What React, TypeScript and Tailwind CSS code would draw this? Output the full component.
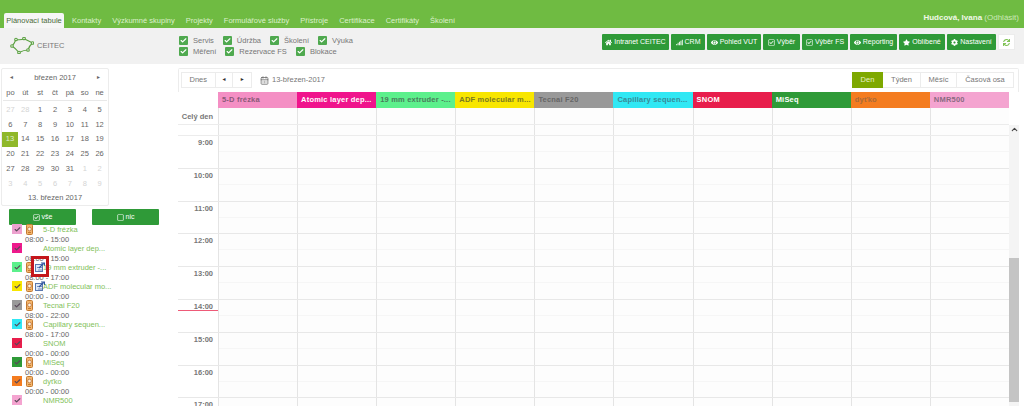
import { Check, CalendarDays, ChevronUp } from 'lucide-react';
import { FaCog, FaEye, FaHome, FaRegCheckSquare, FaRegSquare, FaSignal, FaStar, FaSync } from 'react-icons/fa';

const tabs = ['Kontakty', 'Výzkumné skupiny', 'Projekty', 'Formulářové služby', 'Přístroje', 'Certifikace', 'Certifikáty', 'Školení'];

const filterRows = [
  ['Servis', 'Údržba', 'Školení', 'Výuka'],
  ['Měření', 'Rezervace FS', 'Blokace'],
];

const calendarWeeks = [
  ['27', '28', '1', '2', '3', '4', '5'],
  ['6', '7', '8', '9', '10', '11', '12'],
  ['13', '14', '15', '16', '17', '18', '19'],
  ['20', '21', '22', '23', '24', '25', '26'],
  ['27', '28', '29', '30', '31', '1', '2'],
  ['3', '4', '5', '6', '7', '8', '9'],
];

const columns = [
  { name: '5-D frézka', cls: 'bg-[#f48fc4] text-[#8a5a78]' },
  { name: 'Atomic layer dep...', cls: 'bg-[#f0148c] text-white' },
  { name: '19 mm extruder -...', cls: 'bg-[#5cf08c] text-[#4a7a5c]' },
  { name: 'ADF molecular m...', cls: 'bg-[#f8e600] text-[#7a7a20]' },
  { name: 'Tecnai F20', cls: 'bg-[#999999] text-[#666666]' },
  { name: 'Capillary sequen...', cls: 'bg-[#30e8f4] text-[#3a8a96]' },
  { name: 'SNOM', cls: 'bg-[#e81e4c] text-white' },
  { name: 'MiSeq', cls: 'bg-[#2f9a38] text-white' },
  { name: 'dyťko', cls: 'bg-[#f47c20] text-[#a86a3a]' },
  { name: 'NMR500', cls: 'bg-[#f4a4d0] text-[#8a6a80]' },
];

const devices = [
  { name: '5-D frézka', time: '08:00 - 15:00', color: 'bg-[#eda1cf]', door: true },
  { name: 'Atomic layer dep...', time: '08:00 - 15:00', color: 'bg-[#ee1a8c]', door: false },
  { name: '19 mm extruder -...', time: '08:00 - 17:00', color: 'bg-[#5cf08c]', door: true, blue: true },
  { name: 'ADF molecular mo...', time: '00:00 - 00:00', color: 'bg-[#f8e600]', door: true, blue: true },
  { name: 'Tecnai F20', time: '08:00 - 22:00', color: 'bg-[#999999]', door: true },
  { name: 'Capillary sequen...', time: '08:00 - 17:00', color: 'bg-[#30e8f4]', door: true },
  { name: 'SNOM', time: '00:00 - 00:00', color: 'bg-[#e81e4c]', door: false },
  { name: 'MiSeq', time: '00:00 - 00:00', color: 'bg-[#2f9a38]', door: true },
  { name: 'dyťko', time: '00:00 - 00:00', color: 'bg-[#f47c20]', door: true },
  { name: 'NMR500', time: '', color: 'bg-[#f4a4d0]', door: false },
];

const hours = ['9:00', '10:00', '11:00', '12:00', '13:00', '14:00', '15:00', '16:00', '17:00'];

function DoorIcon() {
  return (
    <svg width="7" height="11" viewBox="0 0 7 11" className="shrink-0">
      <rect x="0.5" y="0.5" width="6" height="10" rx="1" fill="#f2b56c" stroke="#c47a30" />
      <circle cx="3.5" cy="5" r="1.8" fill="#fff4dc" stroke="#a8582a" strokeWidth="0.6" />
      <rect x="2" y="8" width="3" height="1" fill="#c47a30" />
    </svg>
  );
}

function BlueIcon() {
  return (
    <svg width="10" height="10" viewBox="0 0 10 10" className="shrink-0">
      <rect x="0.5" y="2.5" width="7" height="7" fill="#dfe8f6" stroke="#5a78b0" />
      <path d="M2 5.5 H7.5 M3 8 H7" stroke="#5a78b0" strokeWidth="0.8" />
      <path d="M4 6 L8.5 1.5 M6 1 H9.5 V4" fill="none" stroke="#2f55a0" strokeWidth="1.2" />
    </svg>
  );
}

function ToolButton({ icon, label, width }: { icon: React.ReactNode; label: string; width: string }) {
  return (
    <button className={`flex h-[16px] ${width} items-center justify-center gap-[2px] rounded-[1px] bg-[#2f9a38] text-[7px] text-white`}>
      {icon}
      {label}
    </button>
  );
}

function FilterCheck({ label }: { label: string }) {
  return (
    <span className="flex items-center gap-[5px]">
      <span className="flex h-[9px] w-[9px] items-center justify-center rounded-[1px] bg-[#4fa94f]">
        <Check size={7} strokeWidth={4} className="text-white" />
      </span>
      <span>{label}</span>
    </span>
  );
}

function MiniCalendar() {
  return (
    <div className="ml-[1px] h-[138px] w-[108px] rounded-[2px] border border-[#ececec] px-[1px] text-[7.5px] text-[#666666]">
      <div className="flex h-[16px] items-center justify-between px-[6px] pt-[1px]">
        <span className="text-[5px]">◄</span>
        <span>březen 2017</span>
        <span className="text-[5px]">►</span>
      </div>
      <div className="mb-[1px] grid h-[16px] grid-cols-7 items-center border-b border-[#e8e8e8] text-center">
        {['po', 'út', 'st', 'čt', 'pá', 'so', 'ne'].map((d) => (
          <span key={d}>{d}</span>
        ))}
      </div>
      {calendarWeeks.map((week, w) => (
        <div key={w} className="grid h-[14.8px] grid-cols-7 items-center text-center">
          {week.map((day, i) => {
            const muted = (w === 0 && i < 2) || (w === 4 && i > 4) || w === 5;
            const today = w === 2 && i === 0;
            return (
              <span
                key={i}
                className={
                  today
                    ? 'ml-[-1px] flex h-[15px] items-center justify-center bg-[#8fb82a] text-[#dff0d0]'
                    : muted
                      ? 'text-[#d4d4d4]'
                      : ''
                }
              >
                {day}
              </span>
            );
          })}
        </div>
      ))}
      <div className="pt-[1px] text-center">13. březen 2017</div>
    </div>
  );
}

function DeviceList() {
  return (
    <div className="relative mt-[-1px]">
      {devices.map((d) => (
        <div key={d.name} className="h-[19px]">
          <div className="flex h-[10px] items-center">
            <span className={`ml-[12px] flex h-[10px] w-[10px] shrink-0 items-center justify-center ${d.color}`}>
              <Check size={7} strokeWidth={4} className="text-[#5a4a5a]" />
            </span>
            <span className="ml-[4px] flex w-[17px] shrink-0 items-center gap-[2px]">
              {d.door && <DoorIcon />}
              {d.blue && <BlueIcon />}
            </span>
            <span className="whitespace-nowrap text-[7.5px] leading-[9px] text-[#7fc15a]">{d.name}</span>
          </div>
          <div className="ml-[25px] h-[9px] pt-[1px] text-[7.5px] leading-[10px] text-[#666666]">{d.time}</div>
        </div>
      ))}
      <div className="absolute left-[31px] top-[32px] h-[21px] w-[18px] border-[3px] border-[#c4161c]" />
    </div>
  );
}

function Cells({ half }: { half?: boolean }) {
  return (
    <>
      {columns.map((c) => (
        <div key={c.name} className="flex w-[79.1px] flex-col border-l border-[#e4e4e4] bg-[#fdfdfd]">
          {half && <div className="h-[16px] border-b border-[#f6f6f6]" />}
        </div>
      ))}
    </>
  );
}

function Scheduler() {
  return (
    <div className="ml-[69px] mr-[5px] flex min-w-0 flex-1 flex-col overflow-hidden rounded-t-[2px] border-t border-[#ececec]">
      <div className="flex h-[23px] shrink-0 items-start justify-between border-l border-r border-[#ececec] pl-[2px] pr-[4px] pt-[3px] text-[7.5px] text-[#777777]">
        <div className="flex items-center">
          <div className="flex h-[16px] w-[71px] border border-[#ececec]">
            <span className="flex w-[34px] items-center justify-center border-r border-[#ececec]">Dnes</span>
            <span className="flex w-[18px] items-center justify-center border-r border-[#ececec] text-[5px] text-[#333333]">◄</span>
            <span className="flex w-[18px] items-center justify-center text-[5px] text-[#333333]">►</span>
          </div>
          <CalendarDays size={9} className="ml-[8px] text-[#666666]" />
          <span className="ml-[3px]">13-březen-2017</span>
        </div>
        <div className="flex h-[16px]">
          <span className="flex w-[31px] items-center justify-center bg-[#7ea800] text-[#e8f2c8]">Den</span>
          <span className="flex w-[37px] items-center justify-center border-y border-[#ececec]">Týden</span>
          <span className="flex w-[37px] items-center justify-center border border-[#ececec]">Měsíc</span>
          <span className="flex w-[57px] items-center justify-center border-y border-r border-[#ececec]">Časová osa</span>
        </div>
      </div>
      <div className="flex min-h-0 flex-1">
        <div className="flex w-[831px] shrink-0 flex-col">
          <div className="flex h-[16px] shrink-0 pl-[40px]">
            {columns.map((c) => (
              <div
                key={c.name}
                className={`flex w-[79.1px] items-center whitespace-nowrap pl-[4px] text-[7.5px] font-bold tracking-[0.2px] ${c.cls}`}
              >
                {c.name}
              </div>
            ))}
          </div>
          <div className="flex h-[17px] shrink-0 border-b border-[#ececec]">
            <div className="w-[40px] shrink-0 whitespace-nowrap pr-[5px] pt-[3px] text-right text-[7.5px] font-bold text-[#777777]">Celý den</div>
            <Cells />
          </div>
          <div className="flex h-[11px] shrink-0 border-b border-[#ececec]">
            <div className="w-[40px] shrink-0" />
            <Cells />
          </div>
          {hours.map((h) => (
            <div key={h} className="flex h-[32.8px] shrink-0 border-b border-[#e8e8e8]">
              <div className="relative w-[40px] shrink-0 pr-[5px] pt-[1px] text-right text-[7.5px] font-bold text-[#777777]">
                {h}
                {h === '14:00' && <div className="absolute left-0 right-0 top-[10px] h-px bg-[#ee5a78]" />}
              </div>
              <Cells half />
            </div>
          ))}
        </div>
        <div className="w-[10px] shrink-0">
          <div className="mt-[33px] h-[281px] bg-[#f4f4f4]">
            <ChevronUp size={9} strokeWidth={3} className="ml-[0.5px] text-[#444444]" />
            <div className="mt-[124px] h-[144px] bg-[#c4c4c4]" />
          </div>
        </div>
      </div>
    </div>
  );
}

export default function App() {
  return (
    <div className="flex h-[406px] w-[1024px] flex-col overflow-hidden bg-white font-['Liberation_Sans',Arial,sans-serif]">
      <header className="flex h-[28px] shrink-0 items-end justify-between bg-[#6fbb42] pl-[4px] pr-[5px] text-[7.5px]">
        <nav className="flex h-[15px] items-center gap-[11px]">
          <span className="mr-[-3px] flex h-[15px] w-[60px] items-center justify-center whitespace-nowrap rounded-t-[2px] bg-[#f6f6f6] text-[#4a6a3a]">Plánovací tabule</span>
          {tabs.map((t) => (
            <span key={t} className="whitespace-nowrap text-[#dcf0cc]">{t}</span>
          ))}
        </nav>
        <div className="mb-[5px] text-[8px] leading-[10px] text-[#f0f8e8]">
          <b>Hudcová, Ivana</b> <span className="text-[#cbe8b8]">(Odhlásit)</span>
        </div>
      </header>
      <div className="flex h-[36px] shrink-0 bg-[#f1f1f1]">
        <div className="ml-[10px] flex w-[169px] items-center gap-[3px] pb-[1px] text-[7.5px] text-[#777777]">
          <svg width="24" height="17" viewBox="0 0 24 17" fill="none" stroke="#5aa040" strokeWidth="1.1">
            <path d="M2 9 C4 7 5 5 6 2.5 C9 3 12 3 14 1.5 C16 3 19 4 22.5 6 C20 8 19 10 18 13 C15 13 12 14 9 15.5 C7 13 5 11 2 9 Z" />
            <circle cx="6" cy="2.5" r="1.3" fill="#ffffff" />
            <circle cx="14" cy="1.5" r="1.3" fill="#ffffff" />
            <circle cx="22.5" cy="6" r="1.3" fill="#ffffff" />
            <circle cx="18" cy="13" r="1.3" fill="#ffffff" />
            <circle cx="9" cy="15.5" r="1.3" fill="#ffffff" />
            <circle cx="2" cy="9" r="1.3" fill="#ffffff" />
          </svg>
          CEITEC
        </div>
        <div className="flex flex-col pt-[7px] text-[7.5px] leading-[11px] text-[#777777]">
          {filterRows.map((row, i) => (
            <div key={i} className="flex h-[11px] gap-[9px]">
              {row.map((f) => (
                <FilterCheck key={f} label={f} />
              ))}
            </div>
          ))}
        </div>
        <div className="ml-auto mr-[9px] flex gap-[2px] pt-[6px]">
          <ToolButton width="w-[67px]" label="Intranet CEITEC" icon={<FaHome size={7} />} />
          <ToolButton width="w-[34px]" label="CRM" icon={<FaSignal size={7} />} />
          <ToolButton width="w-[54px]" label="Pohled VUT" icon={<FaEye size={7} />} />
          <ToolButton width="w-[37px]" label="Výběr" icon={<FaRegCheckSquare size={7} />} />
          <ToolButton width="w-[46px]" label="Výběr FS" icon={<FaRegCheckSquare size={7} />} />
          <ToolButton width="w-[47px]" label="Reporting" icon={<FaEye size={7} />} />
          <ToolButton width="w-[46px]" label="Oblíbené" icon={<FaStar size={7} />} />
          <ToolButton width="w-[49px]" label="Nastavení" icon={<FaCog size={7} />} />
          <button className="flex h-[16px] w-[17px] items-center justify-center border border-[#ececec] bg-white text-[#7cc050]">
            <FaSync size={7} />
          </button>
        </div>
      </div>
      <main className="flex min-h-0 flex-1 pt-[4px]">
        <aside className="w-[109px] shrink-0">
          <MiniCalendar />
          <div className="mt-[3px] flex w-[160px] gap-[16px] pl-[9px]">
            <button className="flex h-[16px] w-[67px] items-center justify-center gap-[2px] rounded-[1px] bg-[#2f9a38] text-[7px] text-white">
              <FaRegCheckSquare size={7} /> vše
            </button>
            <button className="flex h-[16px] w-[67px] items-center justify-center gap-[2px] rounded-[1px] bg-[#2f9a38] text-[7px] text-white">
              <FaRegSquare size={7} /> nic
            </button>
          </div>
          <div className="w-[170px]">
            <DeviceList />
          </div>
        </aside>
        <Scheduler />
      </main>
    </div>
  );
}
